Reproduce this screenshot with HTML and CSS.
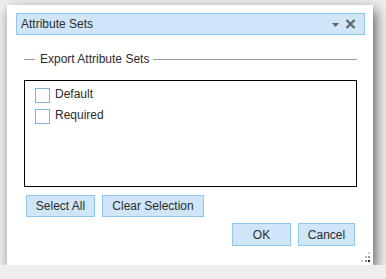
FILE: index.html
```html
<!DOCTYPE html>
<html lang="en">
<head>
    <meta charset="UTF-8">
    <title>Attribute Sets</title>
    <link rel="stylesheet" href="styles.css">
</head>
<body>
    <div class="dialog">
        <div class="title-bar">
            <span class="title">Attribute Sets</span>
            <div class="title-tools">
                <svg class="tool-menu" width="7" height="4" viewBox="0 0 7 4"><path d="M0 0h7L3.5 4z" fill="#666"/></svg>
                <svg class="tool-close" width="11" height="10" viewBox="0 0 11 10"><path d="M1.5 1l8 8M9.5 1l-8 8" stroke="#666" stroke-width="2.4"/></svg>
            </div>
        </div>
        <div class="content">
            <div class="legend">
                <span class="legend-line short"></span>
                <span class="legend-text">Export Attribute Sets</span>
                <span class="legend-line"></span>
            </div>
            <div class="list-box">
                <label class="list-item"><span class="check"></span>Default</label>
                <label class="list-item"><span class="check"></span>Required</label>
            </div>
            <div class="button-row">
                <button class="btn btn-select">Select All</button>
                <button class="btn btn-clear">Clear Selection</button>
            </div>
            <div class="button-row right">
                <button class="btn btn-ok">OK</button>
                <button class="btn btn-cancel">Cancel</button>
            </div>
        </div>
        <svg class="grip" width="12" height="12" viewBox="0 0 12 12">
            <rect x="8" y="1" width="2" height="2" fill="#ccc"/>
            <rect x="5" y="5" width="2" height="2" fill="#bbb"/>
            <rect x="8" y="5" width="2" height="2" fill="#999"/>
            <rect x="1" y="9" width="2" height="2" fill="#ccc"/>
            <rect x="5" y="9" width="2" height="2" fill="#888"/>
            <rect x="8" y="9" width="2" height="2" fill="#222"/>
        </svg>
    </div>
</body>
</html>
```
FILE: styles.css
```css
:root {
    --blue-bg: #cfe6f8;
    --blue-border: #8fc7ef;
    --text-color: #2b2b2b;
}

body {
    margin: 0;
    background: #eeeeee;
    font-family: 'Liberation Sans', Arial, sans-serif;
    font-size: 12px;
    color: var(--text-color);
}

.dialog {
    position: relative;
    box-sizing: border-box;
    width: 366px;
    height: 260px;
    margin: 5px 0 0 7px;
    padding: 8px 8px 0 9px;
    background: #fff;
    box-shadow: 3px 5px 12px rgba(0, 0, 0, 0.6);
}

.title-bar {
    box-sizing: border-box;
    height: 22px;
    padding: 0 8px 0 4px;
    display: flex;
    align-items: center;
    justify-content: space-between;
    background: var(--blue-bg);
    border: 1px solid var(--blue-border);
}

.title {
    font-size: 12px;
}

.title-tools {
    display: flex;
    align-items: center;
    gap: 6px;
}

.tool-menu {
    margin-top: 1px;
}

.content {
    margin: 0 8px;
}

.legend {
    display: flex;
    align-items: center;
    height: 14px;
    margin-top: 17px;
}

.legend-line {
    flex: 1;
    height: 1px;
    background: #999;
}

.legend-line.short {
    flex: 0 0 11px;
}

.legend-text {
    padding: 0 4px 0 5px;
    line-height: 14px;
}

.list-box {
    box-sizing: border-box;
    height: 107px;
    margin-top: 14px;
    padding: 6px 0 0 10px;
    border: 1px solid #000;
    display: flex;
    flex-direction: column;
    gap: 6px;
}

.list-item {
    display: flex;
    align-items: center;
    gap: 5px;
    height: 15px;
    line-height: 15px;
}

.check {
    box-sizing: border-box;
    width: 15px;
    height: 15px;
    margin-top: 1px;
    border: 1px solid #7ab6e3;
    background: #fff;
}

.button-row {
    display: flex;
    gap: 7px;
    margin-top: 8px;
    padding: 0 2px;
}

.button-row.right {
    justify-content: flex-end;
    margin-top: 6px;
}

.btn {
    box-sizing: border-box;
    height: 22px;
    padding: 0;
    background: var(--blue-bg);
    border: 1px solid var(--blue-border);
    font-family: inherit;
    font-size: 12px;
    color: var(--text-color);
}

.btn-select { width: 69px; }
.btn-clear { width: 102px; }
.btn-ok { width: 59px; height: 23px; }
.btn-cancel { width: 57px; height: 23px; }

.grip {
    position: absolute;
    right: 1px;
    bottom: 2px;
}
```
